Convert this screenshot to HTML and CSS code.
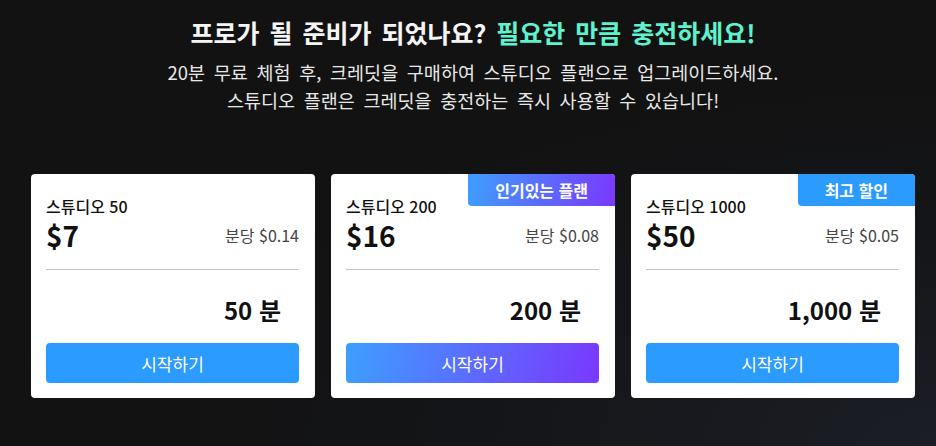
FILE: index.html
```html
<!DOCTYPE html>
<html lang="ko">
<head>
    <meta charset="UTF-8">
    <meta name="viewport" content="width=device-width, initial-scale=1.0">
    <title>크레딧 충전</title>
    <link rel="stylesheet" href="styles.css">
</head>
<body>
    <div class="page">
        <h1 class="title">프로가 될 준비가 되었나요? <span class="accent">필요한 만큼 충전하세요!</span></h1>
        <p class="subtitle">20분 무료 체험 후, 크레딧을 구매하여 스튜디오 플랜으로 업그레이드하세요.<br>스튜디오 플랜은 크레딧을 충전하는 즉시 사용할 수 있습니다!</p>

        <div class="plans">
            <div class="plan">
                <div class="plan-name">스튜디오 50</div>
                <div class="price-row">
                    <span class="price">$7</span>
                    <span class="per-min">분당 $0.14</span>
                </div>
                <div class="amount">50 분</div>
                <button class="start">시작하기</button>
            </div>

            <div class="plan">
                <div class="badge badge-popular">인기있는 플랜</div>
                <div class="plan-name">스튜디오 200</div>
                <div class="price-row">
                    <span class="price">$16</span>
                    <span class="per-min">분당 $0.08</span>
                </div>
                <div class="amount">200 분</div>
                <button class="start start-gradient">시작하기</button>
            </div>

            <div class="plan">
                <div class="badge badge-best">최고 할인</div>
                <div class="plan-name">스튜디오 1000</div>
                <div class="price-row">
                    <span class="price">$50</span>
                    <span class="per-min">분당 $0.05</span>
                </div>
                <div class="amount">1,000 분</div>
                <button class="start">시작하기</button>
            </div>
        </div>
    </div>
</body>
</html>
```

FILE: styles.css
```css
body {
    margin: 0;
    min-height: 446px;
    background: radial-gradient(ellipse at 100% 100%, #1b1e25 0%, #141518 35%, #121212 60%);
    background-color: #121212;
    color: #fff;
    font-family: "Noto Sans CJK KR", "Noto Sans", sans-serif;
}

.page {
    padding: 16px 21px 0 31px;
    text-align: center;
}

.title {
    margin: 0;
    font-size: 25px;
    font-weight: 700;
    line-height: 32px;
    word-spacing: 3px;
    color: #f5f5f5;
}

.accent {
    color: #5ef2cf;
}

.subtitle {
    margin: 10px 0 0;
    font-size: 18.5px;
    line-height: 28px;
    word-spacing: 3.5px;
    color: #e8e8e8;
}

.plans {
    display: grid;
    grid-template-columns: repeat(3, 1fr);
    gap: 16px;
    margin-top: 60px;
    text-align: left;
}

.plan {
    position: relative;
    background-color: #fff;
    color: #111;
    border-radius: 4px;
    padding: 22px 16px 15px 15px;
    overflow: hidden;
}

.plan-name {
    font-size: 16px;
    font-weight: 500;
    line-height: 20px;
}

.price-row {
    display: flex;
    justify-content: space-between;
    align-items: center;
    padding-bottom: 15px;
    border-bottom: 1px solid #c4c4c4;
}

.price {
    font-size: 28px;
    font-weight: 700;
    line-height: 38px;
}

.per-min {
    font-size: 16px;
    color: #444;
}

.amount {
    text-align: right;
    padding: 21px 18px 0 0;
    font-size: 24px;
    font-weight: 700;
    line-height: 38px;
}

.start {
    display: block;
    width: 100%;
    height: 40px;
    margin-top: 14px;
    border: none;
    border-radius: 4px;
    background-color: #2b9bff;
    color: #fff;
    font-family: inherit;
    font-size: 17px;
    cursor: pointer;
}

.start-gradient {
    background: linear-gradient(100deg, #3d9fff 0%, #7a38ff 100%);
}

.badge {
    position: absolute;
    top: 0;
    right: 0;
    height: 32px;
    line-height: 32px;
    padding: 0 27px;
    color: #fff;
    font-size: 16px;
    font-weight: 700;
    border-bottom-left-radius: 4px;
}

.badge-popular {
    background: linear-gradient(100deg, #3d9fff 0%, #7a38ff 100%);
}

.badge-best {
    background-color: #2b9bff;
}
```
